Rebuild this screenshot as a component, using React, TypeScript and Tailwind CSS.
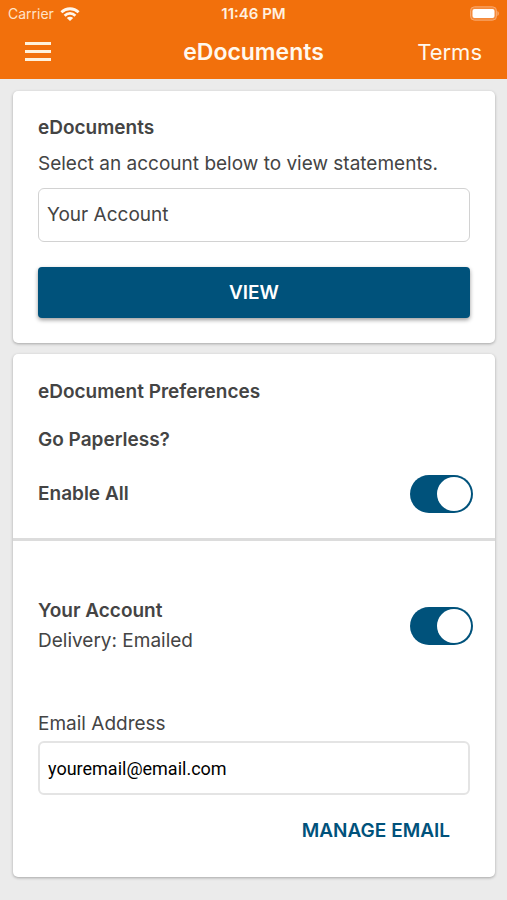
import { useState } from "react";

type ToggleProps = { id: string; label: string };

function Toggle({ id, label }: ToggleProps) {
  const [on, setOn] = useState(true);
  return (
    <input
      id={id}
      type="checkbox"
      role="switch"
      aria-label={label}
      checked={on}
      onChange={(e) => setOn(e.target.checked)}
      className="flex h-[38px] w-[63px] shrink-0 cursor-pointer appearance-none items-center rounded-full bg-gray-300 px-[2px] before:size-[34px] before:rounded-full before:bg-white checked:justify-end checked:bg-[#00527b]"
    />
  );
}

function StatusBar() {
  return (
    <div className="grid h-[27px] grid-cols-[1fr_auto_1fr] items-center px-[8px] text-[14px] leading-[20px]">
      <div className="flex items-center gap-[6px] text-[#ffe3c8]">
        <span>Carrier</span>
        <svg width="20" height="14" viewBox="0 0 20 14" fill="none" stroke="#fff6ec" strokeWidth="2.8" aria-hidden="true">
          <path d="M1.400 5.200C6.200.600 13.800.600 18.600 5.200" />
          <path d="M4.600 8.700c3.100-3 7.700-3 10.800 0" />
          <path d="M10 13.900 6.800 10.900c1.800-1.600 4.600-1.600 6.400 0Z" fill="#fff6ec" stroke="none" />
        </svg>
      </div>
      <span className="text-center text-[15px] font-semibold text-[#fff1e0]">11:46 PM</span>
      <svg className="justify-self-end" width="29" height="15" viewBox="0 0 29 15" aria-hidden="true">
        <rect x="0.500" y="0.800" width="26" height="13.400" rx="4" fill="#f58a3a" stroke="#f8a76c" />
        <rect x="2.500" y="3" width="22" height="9" rx="2" fill="#fff" />
        <path d="M27.400 5v5c1-.5 1.500-1.400 1.500-2.500S28.400 5.500 27.400 5Z" fill="#f8a76c" />
      </svg>
    </div>
  );
}

export default function App() {
  return (
    <div className="min-h-screen bg-[#ebebeb] pb-6 font-['Inter','Liberation_Sans',sans-serif] text-[19px] leading-[24px] text-[#444]">
      <header className="bg-[#f2700c] pb-[3px] text-[#fff8ee]">
        <StatusBar />
        <nav className="grid h-[49px] grid-cols-[1fr_auto_1fr] items-center px-[25px]">
          <button type="button" aria-label="Menu" className="flex w-[26px] flex-col gap-[5px]">
            <span className="h-[3px] bg-[#fff1dc]" />
            <span className="h-[3px] bg-[#fff1dc]" />
            <span className="h-[3px] bg-[#fff1dc]" />
          </button>
          <h1 className="text-[23px] font-semibold">eDocuments</h1>
          <a href="#terms" className="justify-self-end text-[22px]">
            Terms
          </a>
        </nav>
      </header>

      <main className="flex flex-col gap-[11px] pt-3 pr-3 pl-[13px]">
        <section className="rounded-[5px] bg-white p-[25px] shadow-[0_1px_3px_rgba(0,0,0,0.3)]">
          <h2 className="font-semibold">eDocuments</h2>
          <label htmlFor="account" className="mt-3 block">
            Select an account below to view statements.
          </label>
          <select
            id="account"
            className="mt-3 block h-[54px] w-full appearance-none rounded-[6px] border border-[#d2d2d2] bg-white px-2"
          >
            <option>Your Account</option>
          </select>
          <button
            type="button"
            className="mt-[25px] block h-[51px] w-full rounded-[4px] bg-[#00527b] font-semibold text-white shadow-[0_2px_4px_rgba(0,0,0,0.4)]"
          >
            VIEW
          </button>
        </section>

        <section className="rounded-[5px] bg-white shadow-[0_1px_3px_rgba(0,0,0,0.3)]">
          <div className="border-b-[3px] border-[#dcdcdc] pt-[26px] pr-[22px] pb-[25px] pl-[25px] font-semibold">
            <h2>eDocument Preferences</h2>
            <h3 className="mt-6">Go Paperless?</h3>
            <div className="mt-[23px] flex items-center justify-between">
              <label htmlFor="enable-all">Enable All</label>
              <Toggle id="enable-all" label="Enable All" />
            </div>
          </div>

          <div className="flex items-center justify-between pt-[55px] pr-[22px] pl-[25px] leading-[30px]">
            <div>
              <label htmlFor="your-account" className="block font-semibold">
                Your Account
              </label>
              <p>Delivery: Emailed</p>
            </div>
            <Toggle id="your-account" label="Your Account" />
          </div>

          <div className="px-[25px] pt-[56px] pb-[21px]">
            <label htmlFor="email" className="block">
              Email Address
            </label>
            <input
              id="email"
              type="email"
              defaultValue="youremail@email.com"
              className="mt-[5px] block h-[54px] w-full rounded-[6px] border-2 border-[#e4e4e4] bg-white px-2 font-['Roboto',sans-serif] text-[18px] text-black"
            />
            <div className="mt-[11px] flex justify-end">
              <button type="button" className="h-[50px] px-5 font-semibold text-[#00527b]">
                MANAGE EMAIL
              </button>
            </div>
          </div>
        </section>
      </main>
    </div>
  );
}
